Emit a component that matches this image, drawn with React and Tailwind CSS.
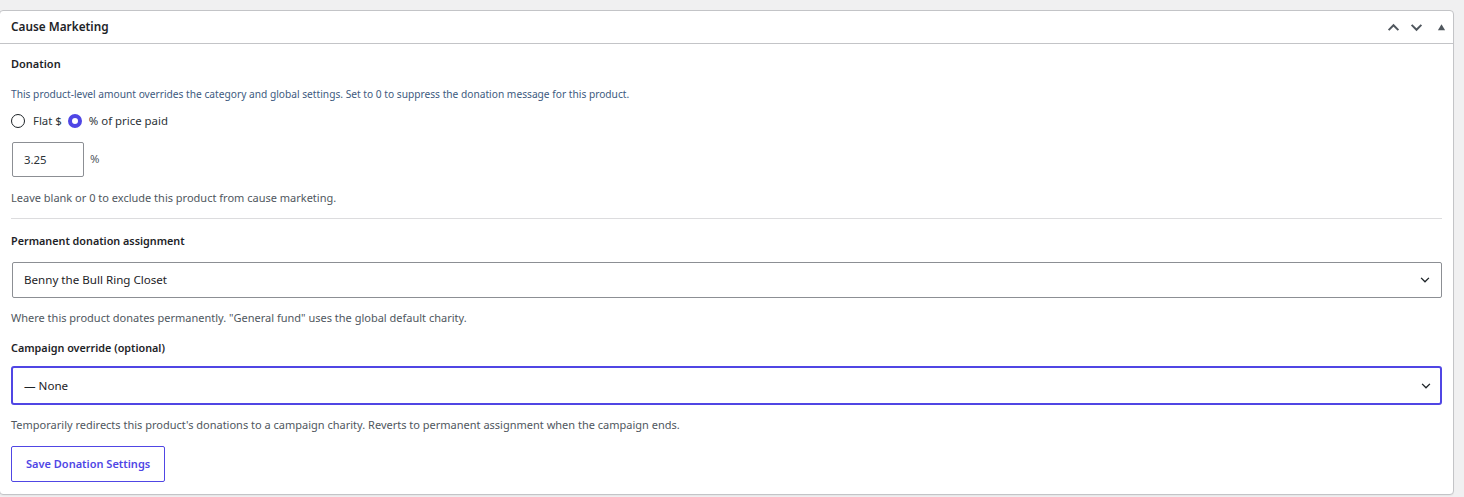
import { useState } from "react";

const font = { fontFamily: '"Noto Sans", "Open Sans", sans-serif' };

const Chevron = ({ className, strokeWidth = "2.2" }) => (
  <svg viewBox="0 0 20 20" className={className} fill="none" stroke="currentColor" strokeWidth={strokeWidth}>
    <path d="M3.5 6.5l6.5 6.5 6.5-6.5" />
  </svg>
);

const App = () => {
  const [mode, setMode] = useState("percent");
  const [amount, setAmount] = useState("3.25");

  return (
    <div className="min-h-[497px] bg-[#f0f0f1] pt-[10px] pr-[10px]" style={font}>
      <div className="bg-white border border-[#c3c4c7] rounded-[4px] -ml-px w-[1455px] shadow-[0_1px_1px_rgba(0,0,0,0.04)]">
        <div className="flex items-center justify-between h-[33px] border-b border-[#c3c4c7] pl-[11px] pr-[7px]">
          <h2 className="text-[11.8px] font-semibold text-[#1d2327]">Cause Marketing</h2>
          <div className="flex items-center text-[#50575e]">
            <Chevron className="w-[15px] h-[15px] rotate-180" strokeWidth="2.6" />
            <Chevron className="w-[15px] h-[15px] ml-[8px]" strokeWidth="2.6" />
            <svg viewBox="0 0 10 10" className="w-[9px] h-[9px] ml-[13px] fill-[#50575e]">
              <path d="M5 1.5l4 6.5H1z" />
            </svg>
          </div>
        </div>

        <div className="px-[11px] pt-[12px] pb-[12px] text-[#3c434a]">
          <h3 className="text-[11px] font-semibold text-[#1d2327] leading-[16px]">Donation</h3>
          <p className="mt-[14px] text-[10.2px] text-[#3d5a80] leading-[16px]">
            This product-level amount overrides the category and global settings. Set to 0 to suppress the donation message for this product.
          </p>
          <div className="mt-[10px] flex items-center text-[11.4px] text-[#2c3338]">
            <label className="flex items-center cursor-pointer">
              <input
                type="radio"
                name="mode"
                checked={mode === "flat"}
                onChange={() => setMode("flat")}
                className="appearance-none w-[14px] h-[14px] rounded-full border border-[#1d2327] checked:border-[4px] checked:border-[#4f46e5]"
              />
              <span className="ml-[8px]">Flat $</span>
            </label>
            <label className="flex items-center cursor-pointer ml-[6px]">
              <input
                type="radio"
                name="mode"
                checked={mode === "percent"}
                onChange={() => setMode("percent")}
                className="appearance-none w-[14px] h-[14px] rounded-full border border-[#1d2327] checked:border-[4px] checked:border-[#4f46e5]"
              />
              <span className="ml-[7px]">% of price paid</span>
            </label>
          </div>

          <div className="mt-[13px] flex items-center">
            <input
              type="text"
              value={amount}
              onChange={(e) => setAmount(e.target.value)}
              className="ml-px w-[72px] h-[35px] border border-[#8c8f94] rounded-[2px] px-[11px] text-[11.4px] text-[#2c3338] outline-none"
            />
            <span className="ml-[6px] text-[11.4px] text-[#50575e] -mt-[2px]">%</span>
          </div>

          <p className="mt-[13px] text-[11px] text-[#50575e] leading-[16px]">
            Leave blank or 0 to exclude this product from cause marketing.
          </p>

          <hr className="mt-[12px] border-t border-[#dcdcde]" />

          <h3 className="mt-[14px] text-[10.8px] font-semibold text-[#1d2327] leading-[16px]">Permanent donation assignment</h3>
          <div className="mt-[13px] relative ml-px">
            <select className="appearance-none w-full h-[36px] border border-[#8c8f94] rounded-[2px] px-[11px] text-[11.6px] text-[#1d2327] bg-white outline-none">
              <option>Benny the Bull Ring Closet</option>
              <option>General fund</option>
            </select>
            <Chevron className="absolute right-[11px] top-[12px] w-[12px] h-[12px] text-[#1d2327] pointer-events-none" />
          </div>
          <p className="mt-[12px] text-[11px] text-[#50575e] leading-[16px]">
            Where this product donates permanently. "General fund" uses the global default charity.
          </p>

          <h3 className="mt-[14px] text-[10.8px] font-semibold text-[#1d2327] leading-[16px]">Campaign override (optional)</h3>
          <div className="mt-[10px] relative">
            <select className="appearance-none w-full h-[39px] border-2 border-[#5046e4] rounded-[3px] px-[11px] text-[11.6px] text-[#1d2327] bg-white outline-none">
              <option>— None</option>
            </select>
            <Chevron className="absolute right-[10px] top-[14px] w-[12px] h-[12px] text-[#1d2327] pointer-events-none" />
          </div>
          <p className="mt-[12px] text-[11px] text-[#50575e] leading-[16px]">
            Temporarily redirects this product's donations to a campaign charity. Reverts to permanent assignment when the campaign ends.
          </p>

          <button className="mt-[13px] h-[36px] px-[14px] border border-[#5046e4] rounded-[2px] text-[11px] font-semibold text-[#4f46e5] bg-white">
            Save Donation Settings
          </button>
        </div>
      </div>
    </div>
  );
};

export default App;
